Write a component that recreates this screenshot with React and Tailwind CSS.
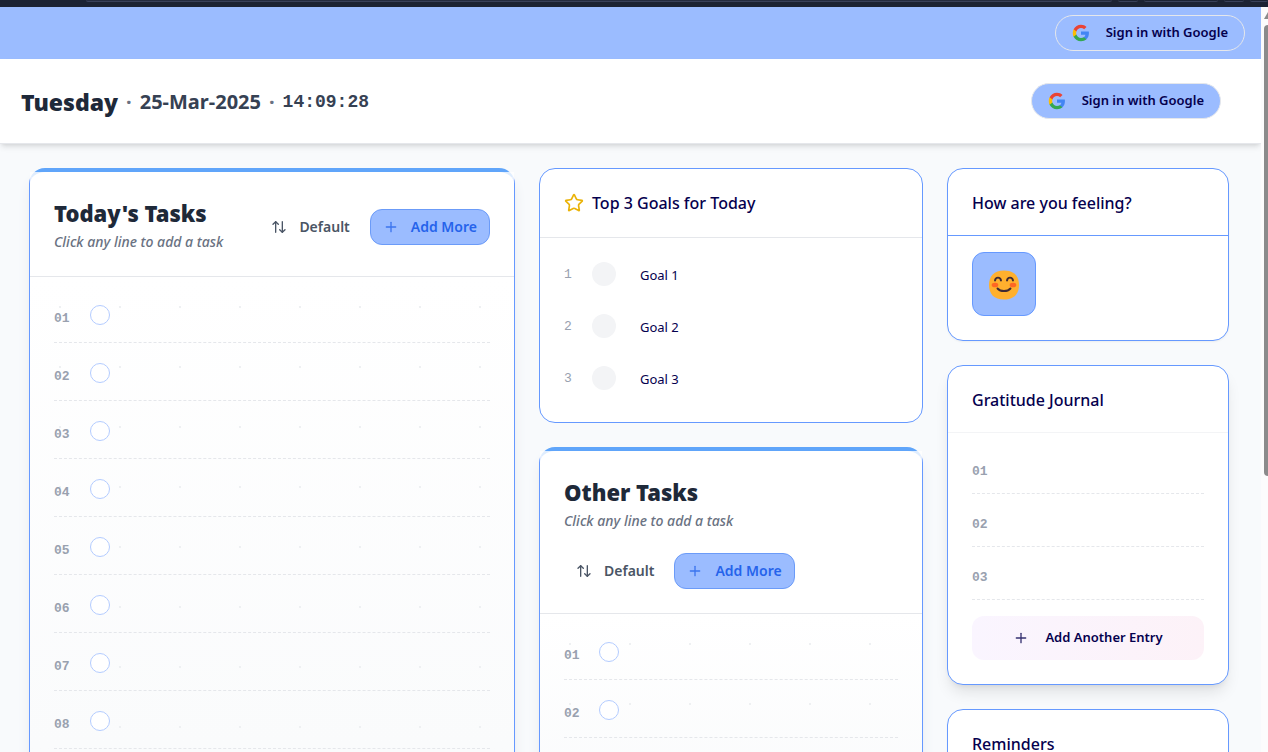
import { Star, Plus, ArrowUpDown } from "lucide-react";

const pad = (n) => String(n).padStart(2, "0");

function GoogleLogo() {
  return (
    <svg viewBox="0 0 24 24" className="size-[18px] shrink-0" aria-hidden="true">
      <path fill="#4285F4" d="M22.56 12.25c0-.78-.07-1.53-.2-2.25H12v4.26h5.92c-.26 1.37-1.04 2.53-2.21 3.31v2.77h3.57c2.08-1.92 3.28-4.74 3.28-8.09z" />
      <path fill="#34A853" d="M12 23c2.97 0 5.46-.98 7.28-2.66l-3.57-2.77c-.98.66-2.23 1.06-3.71 1.06-2.86 0-5.29-1.93-6.16-4.53H2.18v2.84C3.99 20.53 7.7 23 12 23z" />
      <path fill="#FBBC05" d="M5.84 14.09c-.22-.66-.35-1.36-.35-2.09s.13-1.43.35-2.09V7.07H2.18C1.43 8.55 1 10.22 1 12s.43 3.45 1.18 4.93l3.66-2.84z" />
      <path fill="#EA4335" d="M12 5.38c1.62 0 3.06.56 4.21 1.64l3.15-3.15C17.45 2.09 14.97 1 12 1 7.7 1 3.99 3.47 2.18 7.07l3.66 2.84c.87-2.6 3.3-4.53 6.16-4.53z" />
    </svg>
  );
}

function SmileFace() {
  return (
    <svg viewBox="0 0 32 32" className="mt-[2px] size-8" aria-hidden="true">
      <path fill="#ffb02e" d="M16 1.500C26 1.500 31 7 31 16S26 30.500 16 30.500 1 25 1 16 6 1.500 16 1.500z" />
      <ellipse cx="7" cy="16" rx="3.300" ry="2.300" fill="#ff6723" />
      <ellipse cx="25" cy="16" rx="3.300" ry="2.300" fill="#ff6723" />
      <g fill="none" stroke="#402a32" strokeWidth="1.900" strokeLinecap="round">
        <path d="M7 11.500c.6-3.800 5.400-3.800 6 0" />
        <path d="M19 11.500c.6-3.800 5.400-3.800 6 0" />
        <path d="M9.500 19.500c3 3.400 10 3.400 13 0" />
      </g>
    </svg>
  );
}

function SignIn({ className }) {
  return (
    <button type="button" className={`flex h-9 items-center gap-4 rounded-full border border-gray-200 px-4 text-[13px] font-semibold text-[#05004e] ${className}`}>
      <GoogleLogo />
      Sign in with Google
    </button>
  );
}

function SortButton() {
  return (
    <button type="button" className="flex h-9 items-center gap-3 px-3 text-sm font-semibold text-gray-600">
      <ArrowUpDown className="size-4" />
      Default
    </button>
  );
}

function AddMoreButton() {
  return (
    <button type="button" className="flex h-9 items-center gap-3 rounded-xl border border-[#6b9bf8] bg-[#9bbcff] px-3 text-sm font-semibold text-[#2563eb]">
      <Plus className="size-4 opacity-80" />
      Add More
    </button>
  );
}

function TaskCard({ title, count, headClass, actionsClass, rowGap }) {
  return (
    <section className="rounded-2xl border border-t-4 border-[#6699ff] border-t-[#60a5fa] bg-white shadow-lg shadow-gray-200">
      <header className={`flex border-b border-gray-200 bg-white/80 px-6 pt-6 ${headClass}`}>
        <div>
          <h2 className="text-[22px] leading-[34px] font-black text-gray-800">{title}</h2>
          <p className="text-sm leading-6 font-medium text-gray-500 italic">Click any line to add a task</p>
        </div>
        <div className={`flex items-center gap-2 ${actionsClass}`}>
          <SortButton />
          <AddMoreButton />
        </div>
      </header>
      <div className="rounded-b-2xl bg-linear-to-b from-white to-gray-50 px-6 pt-2 pb-24">
        <ol className="bg-[radial-gradient(circle,#eef0f2_1px,transparent_1px)] bg-[size:60px_60px] bg-[position:-24px_-8px]">
          {Array.from({ length: count }, (_, i) => (
            <li key={i} className={`flex h-[58px] items-center border-b border-dashed border-gray-200 pt-[2px] ${rowGap}`}>
              <span className="pt-2 font-['Liberation_Mono',monospace] text-[13px] font-bold text-gray-400">{pad(i + 1)}</span>
              <button type="button" aria-label={`Complete task ${i + 1}`} className="size-5 rounded-full border border-[#b4ccff] bg-white" />
            </li>
          ))}
        </ol>
      </div>
    </section>
  );
}

function SideCard({ title, lineClass, className, children }) {
  return (
    <section className={`rounded-2xl border border-[#6699ff] bg-white ${className}`}>
      <h2 className={`border-b px-6 pt-5 pb-[18px] text-base leading-7 font-medium text-[#05004e] ${lineClass}`}>{title}</h2>
      {children}
    </section>
  );
}

export default function App() {
  return (
    <div className="flex h-screen flex-col overflow-hidden bg-white font-['Noto_Sans','Open_Sans',sans-serif]">
      <div className="h-[7px] shrink-0 bg-[#1c2333]">
        <div className="ml-[86px] flex h-[2px] gap-[6px]">
          <div className="flex-1 rounded-b border-b border-[#39415a] bg-[#252c3f]" />
          <div className="w-5 rounded-b border-b border-[#39415a]" />
          <div className="w-[74px] rounded-b border-b border-[#39415a]" />
          <div className="w-5 rounded-b border-b border-[#39415a]" />
          <div className="w-[18px] rounded-b border-b border-[#39415a]" />
        </div>
      </div>
      <div className="flex min-h-0 flex-1">
        <div className="flex min-w-0 flex-1 flex-col overflow-y-auto [scrollbar-width:none]">
          <div className="flex h-[52px] shrink-0 items-center justify-end bg-[#9bbcff] pr-4">
            <SignIn className="" />
          </div>
          <header className="z-10 flex h-[85px] shrink-0 items-center justify-between border-b border-gray-200 bg-white pr-10 pl-[21px] shadow-md">
            <div className="flex items-center gap-2 pt-[2px]">
              <h1 className="text-[23px] font-black text-gray-800">Tuesday</h1>
              <span className="text-xl font-bold text-gray-500">·</span>
              <span className="text-xl font-bold text-gray-700">25-Mar-2025</span>
              <span className="text-xl font-bold text-gray-500">·</span>
              <time className="font-['Liberation_Mono',monospace] text-lg font-bold text-gray-700">14:09:28</time>
            </div>
            <SignIn className="bg-[#9bbcff]" />
          </header>
          <main className="grid flex-1 grid-cols-12 items-start gap-6 bg-[#f8fafc] pt-6 pr-8 pb-6 pl-[29px]">
            <div className="col-span-5">
              <TaskCard title="Today's Tasks" count={8} headClass="h-[105px] items-start justify-between" actionsClass="mt-[13px]" rowGap="gap-5" />
            </div>
            <div className="col-span-4 space-y-6">
              <section className="rounded-2xl border border-[#6699ff] bg-white">
                <h2 className="flex h-[69px] items-center gap-2 border-b border-gray-200 px-6 text-base font-medium text-[#05004e]">
                  <Star className="size-5 text-[#eab308]" />
                  Top 3 Goals for Today
                </h2>
                <ol className="space-y-4 px-6 pt-[18px] pb-[26px]">
                  {[1, 2, 3].map((n) => (
                    <li key={n} className="flex h-9 items-center">
                      <span className="w-7 pt-[2px] font-['Liberation_Mono',monospace] text-[13px] text-gray-400">{n}</span>
                      <button type="button" aria-label={`Complete goal ${n}`} className="size-6 rounded-full bg-gray-100" />
                      <input aria-label={`Goal ${n}`} placeholder={`Goal ${n}`} className="ml-3 h-9 min-w-0 flex-1 px-3 pt-[2px] text-[13px] outline-none placeholder:text-[#05004e]" />
                    </li>
                  ))}
                </ol>
              </section>
              <TaskCard title="Other Tasks" count={2} headClass="flex-col pb-6" actionsClass="mt-5" rowGap="gap-[19px]" />
            </div>
            <div className="col-span-3 space-y-6">
              <SideCard title="How are you feeling?" lineClass="border-[#6699ff]" className="shadow-xs">
                <div className="px-6 pt-4 pb-6">
                  <button type="button" aria-label="Happy" className="flex size-16 items-center justify-center rounded-xl border border-[#6699ff] bg-[#9bbcff]">
                    <SmileFace />
                  </button>
                </div>
              </SideCard>
              <SideCard title="Gratitude Journal" lineClass="border-gray-100" className="shadow-lg">
                <div className="px-6 pt-2 pb-6">
                  {[1, 2, 3].map((n) => (
                    <div key={n} className="flex h-[53px] items-center border-b border-dashed border-gray-200 pt-[10px] font-['Liberation_Mono',monospace] text-[13px] font-bold text-gray-400">
                      {pad(n)}
                    </div>
                  ))}
                  <button type="button" className="mt-4 flex h-11 w-full items-center justify-center gap-4 rounded-xl bg-linear-to-r from-purple-50 to-pink-50 text-[13px] font-semibold text-[#05004e]">
                    <Plus className="size-4 opacity-80" />
                    Add Another Entry
                  </button>
                </div>
              </SideCard>
              <SideCard title="Reminders" lineClass="border-gray-100" className="shadow-xs">
                <div className="h-24" />
              </SideCard>
            </div>
          </main>
        </div>
        <div className="flex w-[7px] shrink-0 flex-col bg-[#fcfcfc] pt-1 pl-[3px]">
          <svg viewBox="0 0 4 8" className="h-2 w-1" aria-hidden="true">
            <path fill="#8b8b8b" d="M0 8 4 1v7z" />
          </svg>
          <div className="mt-[6px] h-[451px] rounded-l bg-[#8b8b8b]" />
        </div>
      </div>
    </div>
  );
}
